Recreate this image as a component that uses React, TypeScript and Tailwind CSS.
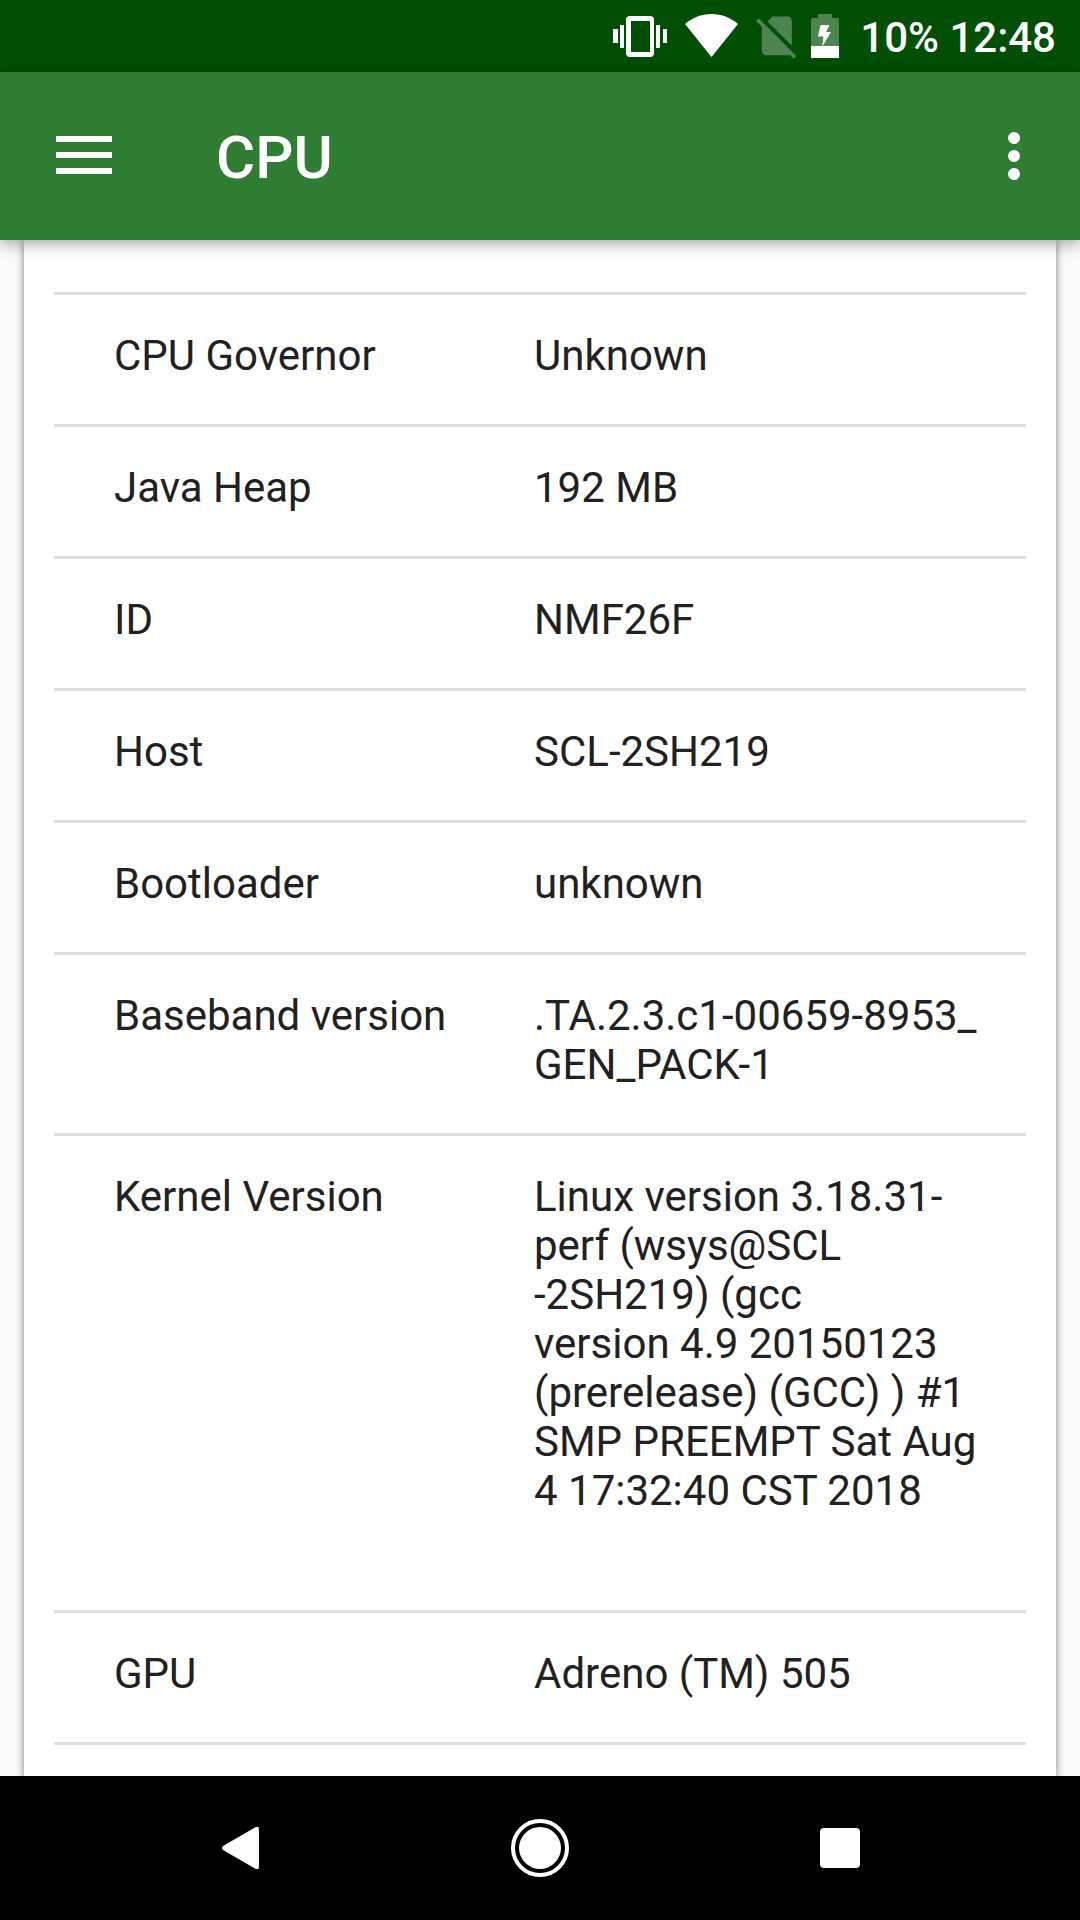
import { useState, type ReactNode } from "react";

type Spec = {
  label: string;
  value: string;
  spaced?: boolean;
};

const specs: Spec[] = [
  { label: "CPU Governor", value: "Unknown" },
  { label: "Java Heap", value: "192 MB" },
  { label: "ID", value: "NMF26F" },
  { label: "Host", value: "SCL-2SH219" },
  { label: "Bootloader", value: "unknown" },
  { label: "Baseband version", value: ".TA.2.3.c1-00659-8953_\nGEN_PACK-1" },
  {
    label: "Kernel Version",
    value:
      "Linux version 3.18.31-\nperf (wsys@SCL\n-2SH219) (gcc\nversion 4.9 20150123\n(prerelease) (GCC) ) #1\nSMP PREEMPT Sat Aug\n4 17:32:40 CST 2018",
    spaced: true,
  },
  { label: "GPU", value: "Adreno (TM) 505" },
];

function StatusBar() {
  return (
    <div className="flex h-[72px] shrink-0 items-center justify-end bg-[#004f04] pr-6 text-white">
      <svg className="h-[72px] w-[240px]" viewBox="0 0 240 72" fill="currentColor" aria-hidden>
        {/* vibrate */}
        <path d="M13 29h5v14h-5zM20 25h4v23h-4zM56 25h4v23h-4zM63 29h4v14h-4z" />
        <path
          fillRule="evenodd"
          d="M30 16h20a4 4 0 0 1 4 4v33a4 4 0 0 1-4 4H30a4 4 0 0 1-4-4V20a4 4 0 0 1 4-4zM31 21v31h19V21z"
        />
        {/* wifi */}
        <path d="M111.500 57L85 24c7-6 16-10 26.500-10S131 18 138 24z" />
        {/* no sim */}
        <path
          transform="translate(151 10) scale(2.150)"
          opacity="0.3"
          d="M18.990 5c0-1.100-.89-2-1.990-2h-7L7.660 5.340 19 16.680 18.990 5zM3.650 3.880L2.380 5.150 5 7.770V19c0 1.100.9 2 2 2h10.010c.35 0 .67-.1.96-.26l1.880 1.880 1.270-1.270L3.650 3.880z"
        />
        {/* battery, charging */}
        <path opacity="0.3" d="M211 46V20q0-2 2-2h5v-4h14v4h5q2 0 2 2v26z" />
        <path d="M211 46h28v12h-28zM220.500 25h9l-3.500 7h5L222 47l1.500-10.500H218z" />
      </svg>
      <span className="pt-0.5 pl-5 text-[42px] leading-[49px] font-medium">10% 12:48</span>
    </div>
  );
}

function BarButton({ label, onClick, children }: { label: string; onClick?: () => void; children: ReactNode }) {
  return (
    <button
      type="button"
      aria-label={label}
      onClick={onClick}
      className="flex h-full w-[168px] items-center justify-center active:bg-white/10"
    >
      {children}
    </button>
  );
}

function AppBar() {
  const [menuOpen, setMenuOpen] = useState(false);

  return (
    <header className="relative z-10 flex h-[168px] shrink-0 items-center bg-[#2f7d32] text-white shadow-[0_4px_14px_rgba(0,0,0,0.35)]">
      <BarButton label="Open navigation">
        <svg className="h-10 w-14" viewBox="0 0 56 40" fill="currentColor" aria-hidden>
          <path d="M0 0h56v6H0zM0 16h56v6H0zM0 32h56v6H0z" />
        </svg>
      </BarButton>
      <h1 className="flex-1 pt-1 pl-12 text-[60px] leading-[70px] font-medium">CPU</h1>
      <button
        type="button"
        aria-label="More options"
        aria-expanded={menuOpen}
        onClick={() => setMenuOpen(!menuOpen)}
        className="flex h-full w-[132px] items-center justify-center active:bg-white/10"
      >
        <svg className="h-12 w-3" viewBox="0 0 12 48" fill="currentColor" aria-hidden>
          <circle cx="6" cy="6" r="6" />
          <circle cx="6" cy="24" r="6" />
          <circle cx="6" cy="42" r="6" />
        </svg>
      </button>
    </header>
  );
}

function SpecTable() {
  return (
    <table className="w-full border-b-[3px] border-[#dfdfdf] text-[42px] leading-[49px] text-[#212121]">
      <tbody>
        {specs.map((spec) => (
          <tr key={spec.label} className="border-t-[3px] border-[#dfdfdf] align-top">
            <th scope="row" className="w-[480px] pt-9 pb-11 pl-[60px] text-left font-normal">
              {spec.label}
            </th>
            <td className={spec.spaced ? "pt-9 pb-[95px] whitespace-pre-line" : "pt-9 pb-11 whitespace-pre-line"}>
              {spec.value}
            </td>
          </tr>
        ))}
      </tbody>
    </table>
  );
}

function NavBar() {
  return (
    <nav className="flex h-36 shrink-0 items-center justify-center bg-black text-white">
      <button type="button" aria-label="Back" className="flex h-full w-[300px] items-center justify-center">
        <svg className="h-[60px] w-[60px]" viewBox="0 0 60 60" fill="currentColor" aria-hidden>
          <path d="M13 28L45 9.500q4-2 4 2v37q0 4-4 2L13 32q-2-2 0-4z" />
        </svg>
      </button>
      <button type="button" aria-label="Home" className="flex h-full w-[300px] items-center justify-center">
        <svg className="h-[60px] w-[60px]" viewBox="0 0 60 60" fill="currentColor" aria-hidden>
          <circle cx="30" cy="30" r="27" fill="none" stroke="currentColor" strokeWidth="4" />
          <circle cx="30" cy="30" r="21" />
        </svg>
      </button>
      <button type="button" aria-label="Recent apps" className="flex h-full w-[300px] items-center justify-center">
        <svg className="h-10 w-10" viewBox="0 0 40 40" fill="currentColor" aria-hidden>
          <rect width="40" height="40" rx="4" />
        </svg>
      </button>
    </nav>
  );
}

export default function App() {
  return (
    <div className="flex h-dvh flex-col bg-[#fafafa] font-[Roboto,sans-serif]">
      <StatusBar />
      <AppBar />
      <main className="min-h-0 flex-1 overflow-hidden px-6">
        <div className="min-h-full bg-white px-[30px] pt-[52px] shadow-[0_2px_8px_rgba(0,0,0,0.5)]">
          <SpecTable />
        </div>
      </main>
      <NavBar />
    </div>
  );
}
